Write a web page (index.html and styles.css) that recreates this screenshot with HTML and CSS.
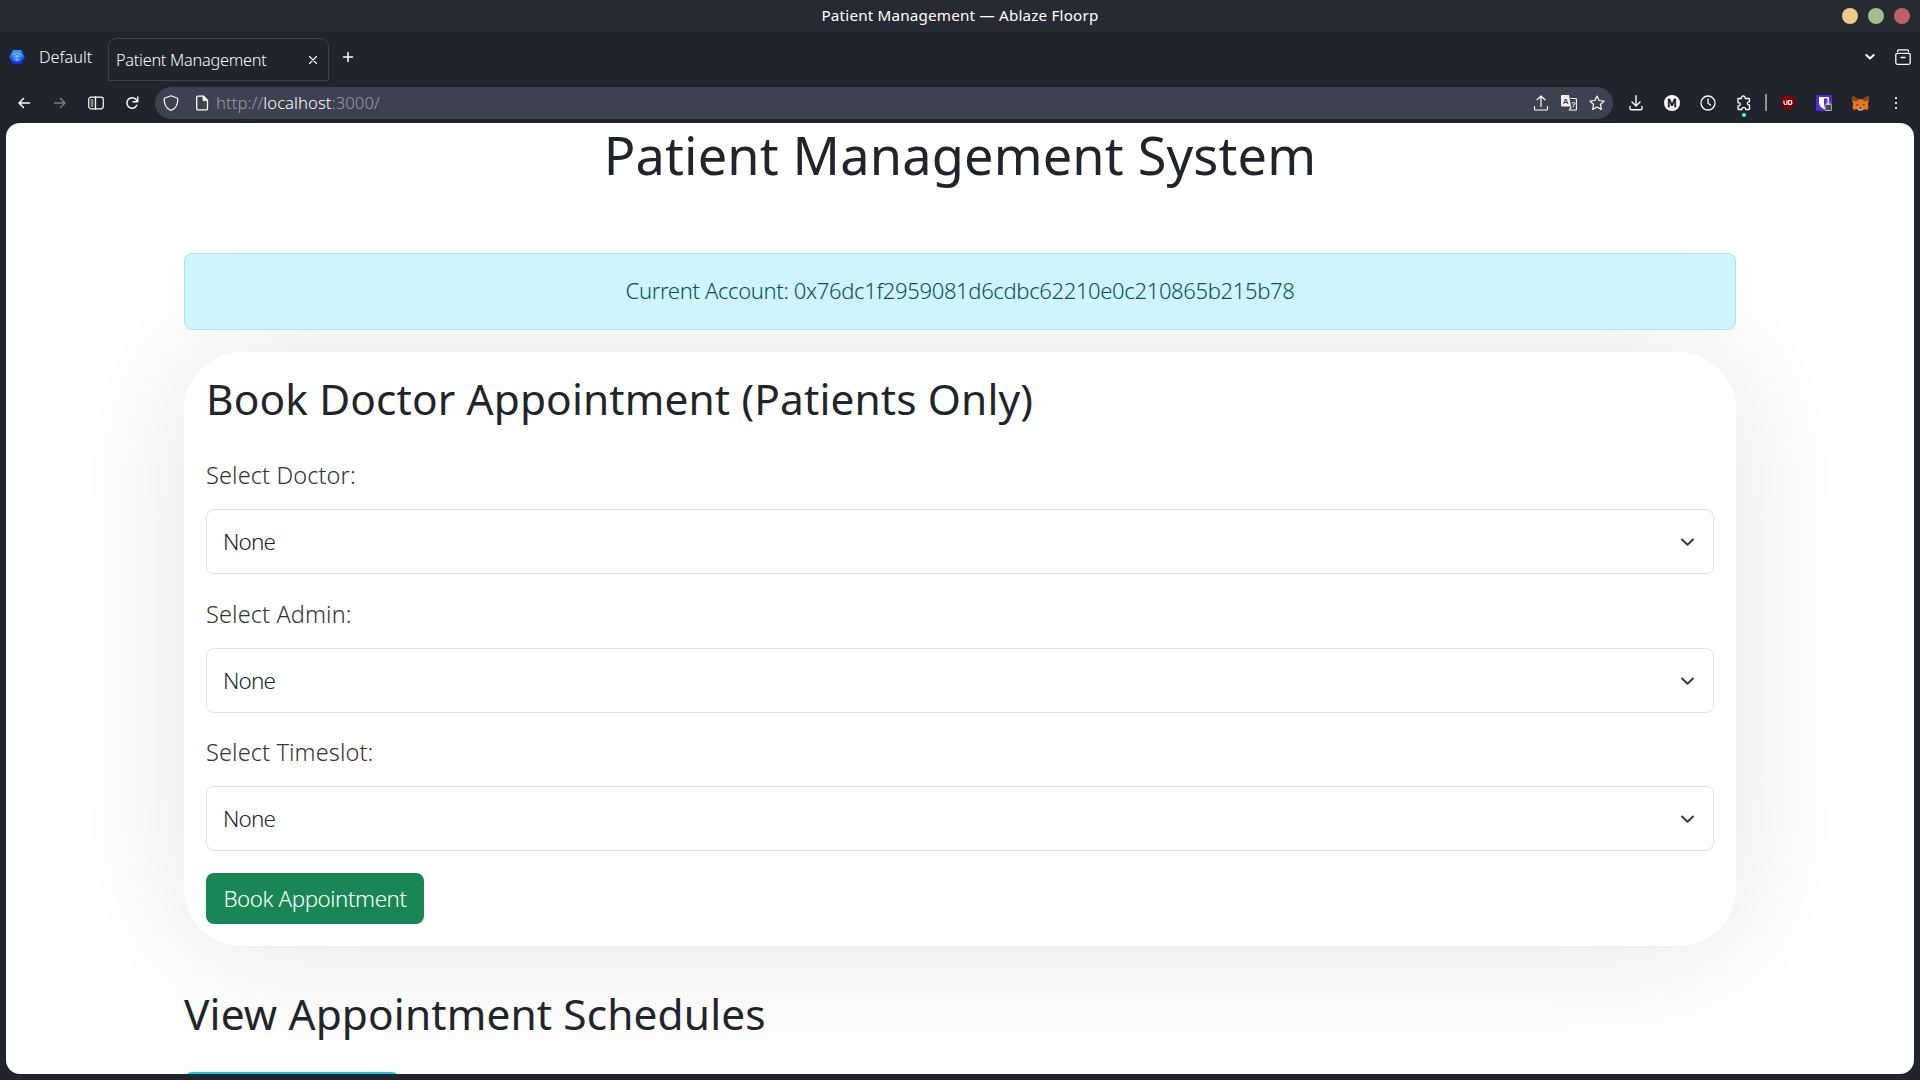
FILE: index.html
```html
<!DOCTYPE html>
<html lang="en">
<head>
<meta charset="utf-8">
<title>Patient Management</title>
<link rel="stylesheet" href="styles.css">
</head>
<body>
<div class="window">
  <header class="titlebar">
    <span class="titlebar-text">Patient Management — Ablaze Floorp</span>
    <div class="window-buttons"><i class="dot minimize"></i><i class="dot maximize"></i><i class="dot close"></i></div>
  </header>

  <div class="tabbar">
    <svg class="workspace-icon" width="16" height="16" viewBox="0 0 16 16">
      <defs><linearGradient id="hex" x1="0" y1="0" x2="0" y2="1"><stop offset="0" stop-color="#2fa4f7"/><stop offset="1" stop-color="#0b2df0"/></linearGradient></defs>
      <path d="M4.6 1h6.8q.6 0 .9.5l3.1 5.7q.4.8 0 1.6l-3.1 5.7q-.3.5-.9.5H4.6q-.6 0-.9-.5L.6 8.800q-.4-.8 0-1.600l3.100-5.700q.3-.5.9-.5z" fill="url(#hex)"/>
      <g fill="none" stroke="#a9d0ff" stroke-width=".8"><path d="M3.600 6.500Q4.500 4 8 4t4.400 2.500M4 7.500q3-1.500 3.200 4.500M12 7.500q-3-1.500-3.200 4.500M8 6v6.500M5.500 5.500Q8 6 8 8q0-2 2.500-2.500M4.200 9.500q1 0 1.500 2M11.800 9.500q-1 0-1.500 2"/></g>
    </svg>
    <span class="workspace-name">Default</span>
    <div class="tab">
      <span class="tab-title">Patient Management</span>
      <svg width="10" height="10" viewBox="0 0 10 10" class="line"><path d="M1.500 1.500l7 7M8.500 1.500l-7 7" stroke-width="1.100"/></svg>
    </div>
    <svg class="new-tab line" width="12" height="12" viewBox="0 0 12 12"><path d="M6 1.500v9M1.500 6h9" stroke-width="1.500"/></svg>
    <div class="tabbar-end">
      <svg width="10" height="8" viewBox="0 0 10 8" class="line"><path d="M1.300 2L5 5.500 8.700 2" stroke-width="2"/></svg>
      <svg width="16" height="16" viewBox="0 0 16 16" class="line"><rect x=".8" y="4.300" width="14.400" height="11" rx="1.500" stroke-width="1.300"/><path d="M2.500 2.500Q2.500.8 4 .8h8q1.500 0 1.500 1.700M6 8.500h4" stroke-width="1.300"/></svg>
    </div>
  </div>

  <nav class="navbar">
    <div class="tool"><svg width="14" height="14" viewBox="0 0 14 14" class="line"><path d="M12.500 7H2M6.500 2.500L2 7l4.500 4.500" stroke-width="1.500"/></svg></div>
    <div class="tool dim"><svg width="14" height="14" viewBox="0 0 14 14" class="line"><path d="M1.500 7H12M7.500 2.500L12 7l-4.500 4.500" stroke-width="1.500"/></svg></div>
    <div class="tool"><svg width="16" height="14" viewBox="0 0 16 14" class="line"><rect x=".7" y="1.200" width="14.600" height="11.600" rx="2.500" stroke-width="1.200"/><path d="M7.500 1v12" stroke-width="1.300"/><path d="M3 4h2M3 6h2M3 8h2M3 10h2" stroke-width=".9"/></svg></div>
    <div class="tool"><svg width="14" height="14" viewBox="0 0 14 14" class="line"><path d="M11.800 9.200A5.200 5.200 0 1 1 11 3.500l1.200 1.300" stroke-width="1.500"/><path d="M12.700 1v4.700H8" stroke-width="1.500"/></svg></div>

    <div class="urlbar">
      <svg width="16" height="16" viewBox="0 0 16 16" class="line"><path d="M8 .8l6 2.200q.8.300.8 1.200c0 5-2.500 9.300-6.200 10.900q-.6.200-1.200 0C3.700 13.500 1.200 9.200 1.200 4.200q0-.9.800-1.200z" stroke-width="1.200"/></svg>
      <svg class="page-icon line" width="14" height="16" viewBox="0 0 14 16"><path d="M1.700 2.200q0-1 1-1h5.800l4 4v8.600q0 1-1 1H2.700q-1 0-1-1z" stroke-width="1.300"/><path d="M8 1.200v4.500h4.500z" fill="#fbfbfe" stroke-width=".8"/></svg>
      <span class="url">http://<b>localhost</b>:3000/</span>
      <div class="url-actions">
        <svg width="16" height="16" viewBox="0 0 16 16" class="line"><path d="M8 11.500V1M4 4.800L8 1l4 3.800M1.500 11.500V14q0 1 1 1h11q1 0 1-1v-2.500" stroke-width="1.200"/></svg>
        <svg width="16" height="16" viewBox="0 0 16 16"><path d="M1 0h7l2 11.500H1q-1 0-1-1V1q0-1 1-1z" fill="#f2f2f6"/><text x="1.700" y="8.500" class="glyph-a">A</text><path d="M9.500 3.500H14.500q1 0 1 1V14q0 1-1 1H8.500l1.700-3.500" fill="none" stroke="#f2f2f6" stroke-width="1.200"/><text x="10" y="12" class="glyph-q">?</text></svg>
        <svg width="16" height="16" viewBox="0 0 16 16" class="line"><path d="M8 1l2.100 4.500 5 .6-3.700 3.400 1 4.900L8 12l-4.400 2.400 1-4.900L.9 6.100l5-.6z" stroke-width="1.200"/></svg>
      </div>
    </div>

    <div class="tool"><svg width="14" height="16" viewBox="0 0 14 16" class="line"><path d="M7 .8v10M3 7l4 3.900L11 7M1 11.500v2q0 1.300 1.300 1.300h9.400q1.300 0 1.300-1.300v-2" stroke-width="1.400"/></svg></div>
    <div class="tool"><svg width="16" height="16" viewBox="0 0 16 16"><circle cx="8" cy="8" r="8" fill="#fff"/><path d="M4 12.300V3.700h1.900L8 8.300l2.100-4.600H12v8.600h-1.600V7L8.700 11H7.300L5.600 7v5.300z" fill="#20242c" stroke="#20242c" stroke-width=".3"/></svg></div>
    <div class="tool"><svg width="16" height="16" viewBox="0 0 16 16" class="line"><circle cx="8" cy="8" r="7" stroke-width="1.300"/><path d="M8 4v4.200l2.500 1.800" stroke-width="1.300"/></svg></div>
    <div class="tool badge"><svg width="16" height="16" viewBox="0 0 16 16" class="line"><path d="M2 3.500h3.500C5.200 1.800 6.200 1 7.300 1S9.400 1.800 9.200 3.500h3.600q.7 0 .7.700v2.600c-1.500-.2-2.100.6-2.100 1.600s.8 1.700 2.100 1.600v3.800q0 .7-.7.700H9.600c.1-1.400-.7-2.100-1.800-2.100s-2 .7-1.900 2.100H2.700q-.7 0-.7-.7v-3c1.500.2 2.300-.5 2.300-1.600S3.500 7.400 2 7.600z" stroke-width="1.300"/></svg></div>
    <span class="separator"></span>
    <div class="tool"><svg width="16" height="16" viewBox="0 0 16 16"><path d="M8 0q3 1.700 7 2c0 7-1 11-7 14C2 13 1 9 1 2q4-.3 7-2z" fill="#800000"/><path d="M4 5.500V8q0 1.500 1.500 1.500T7 8V5.500M8.700 5.500v4H10q1.800 0 1.800-2t-1.800-2z" fill="none" stroke="#fff" stroke-width="1.200"/></svg></div>
    <div class="tool"><svg width="16" height="16" viewBox="0 0 16 16"><rect width="16" height="16" rx="1.500" fill="#4a2fe0"/><path d="M3 2h10v6q0 3.500-5 6.300Q3 11.500 3 8z" fill="#fff"/><path d="M8 3.500h3.500V8q0 2-3.500 4.200z" fill="#4a2fe0"/><rect x="9" y="9.500" width="6.700" height="6" rx=".8" fill="#4b4b4b" stroke="#e8e8e8" stroke-width=".7"/><path d="M10.500 9.500V8.300q0-1.500 1.800-1.500t1.800 1.500v1.200" fill="none" stroke="#999" stroke-width="1.200"/></svg></div>
    <div class="tool"><svg width="17" height="16" viewBox="0 0 17 16"><path d="M.8.700l5.500 3.500h4.400L16.200.700l.6 4.800-1 3.500.8 3.300-1.300 2.700-3.300-.8-1.500 1.200H6.500L5 14l-3.300 1L.4 12.300 1.200 9 .2 5.500z" fill="#e8761b"/><path d="M.8.700l5.500 3.500L5 6.500.7 5.600zM16.200.700l-5.500 3.500L12 6.500l4.300-.9z" fill="#8a461a"/><path d="M4.500 8.700l2.400 1.200-2.200.5zM12.500 8.700l-2.400 1.200 2.200.5z" fill="#33302c"/><path d="M5.500 13l1.500-1h3l1.500 1-1.200 2.300H6.700z" fill="#d8bfb0"/><path d="M7.200 12.600h2.600l.4 1.200H6.800z" fill="#28201c"/></svg></div>
    <div class="tool"><svg width="4" height="14" viewBox="0 0 4 14" fill="#d8d8dc"><path d="M1 1h2v2H1zM1 6h2v2H1zM1 11h2v2H1z"/></svg></div>
  </nav>

  <main class="viewport">
    <h1 class="page-title">Patient Management System</h1>
    <div class="container">
      <div class="alert">Current Account: 0x76dc1f2959081d6cdbc62210e0c210865b215b78</div>
      <section class="card">
        <h2 class="heading">Book Doctor Appointment (Patients Only)</h2>
        <div class="field"><span class="label">Select Doctor:</span>
          <div class="select">None<svg class="caret" width="21" height="21" viewBox="0 0 21 21"><path d="M5 8.500l5.500 5.300L16 8.500"/></svg></div></div>
        <div class="field"><span class="label">Select Admin:</span>
          <div class="select">None<svg class="caret" width="21" height="21" viewBox="0 0 21 21"><path d="M5 8.500l5.500 5.300L16 8.500"/></svg></div></div>
        <div class="field"><span class="label">Select Timeslot:</span>
          <div class="select">None<svg class="caret" width="21" height="21" viewBox="0 0 21 21"><path d="M5 8.500l5.500 5.300L16 8.500"/></svg></div></div>
        <button class="button">Book Appointment</button>
      </section>
      <h2 class="heading schedules">View Appointment Schedules</h2>
      <button class="button info" aria-label="View schedules"></button>
    </div>
  </main>
</div>
</body>
</html>
```

FILE: styles.css
```css
* { box-sizing: border-box; }
body {
  margin: 0;
  font-family: "Noto Sans", "Open Sans", sans-serif;
  font-weight: 340;
  color: #212529;
}
svg { display: block; flex: none; }
.line { fill: none; stroke: #fbfbfe; stroke-linecap: round; stroke-linejoin: round; }

.window {
  height: 1080px;
  display: flex;
  flex-direction: column;
  background: #20242c;
  overflow: hidden;
}

.titlebar {
  height: 32px;
  flex: none;
  display: grid;
  grid-template-columns: 1fr auto 1fr;
  align-items: center;
  background: #262a33;
}
.titlebar-text {
  grid-column: 2;
  padding-bottom: 2px;
  font-size: 15.200px;
  font-weight: 400;
  line-height: 28px;
  letter-spacing: 0.200px;
  color: #fff;
}
.window-buttons { display: flex; gap: 10px; justify-content: flex-end; padding-right: 10px; }
.dot { width: 16px; height: 16px; border-radius: 50%; }
.minimize { background: #ebcb8b; }
.maximize { background: #a3be8c; }
.close { background: #bf616a; }

.tabbar {
  height: 50px;
  flex: none;
  display: flex;
  align-items: center;
  padding-left: 9px;
  color: #fbfbfe;
  font-size: 16.300px;
}
.workspace-name { width: 69px; margin-left: 14px; }
.tab {
  width: 221px;
  height: 43px;
  margin-top: 5px;
  padding: 0 10px 0 7px;
  display: flex;
  align-items: center;
  justify-content: space-between;
  border: 1px solid #3b4150;
  border-radius: 8px 8px 0 0;
}
.tab-title { letter-spacing: -0.250px; }
.new-tab { margin-left: 13px; }
.tabbar-end { display: flex; align-items: center; gap: 20px; margin-left: auto; padding-right: 9px; }

.navbar {
  height: 41px;
  flex: none;
  display: flex;
  align-items: center;
  padding: 0 6px;
}
.tool { width: 36px; height: 32px; display: flex; align-items: center; justify-content: center; position: relative; }
.dim { opacity: 0.400; }
.badge::after {
  content: "";
  position: absolute;
  left: 16px;
  bottom: 2px;
  width: 4px;
  height: 4px;
  border-radius: 50%;
  background: #4dffc0;
}
.separator { width: 2px; height: 17px; margin: 0 3px; background: #8f9197; }
.urlbar {
  flex: 1;
  height: 32px;
  margin: 0 5px;
  padding: 0 8px;
  display: flex;
  align-items: center;
  border-radius: 16px;
  background: #3d4251;
}
.page-icon { margin: 0 7px 0 16px; }
.url { font-size: 16.700px; color: #9a9ca6; letter-spacing: 0.050px; }
.url b { font-weight: inherit; color: #fbfbfe; }
.url-actions { display: flex; gap: 12px; margin-left: auto; }
.glyph-a { font: 700 8px "Liberation Sans", sans-serif; fill: #3d4251; }
.glyph-q { font: 700 8px "Liberation Sans", sans-serif; fill: #f2f2f6; }

.viewport {
  flex: 1;
  min-height: 0;
  margin: 0 6px 6px;
  overflow: hidden;
  border-radius: 14px;
  background: #fff;
}
.page-title {
  margin: 0 0 66px;
  font-size: 52.300px;
  font-weight: 400;
  line-height: 64px;
  letter-spacing: 0.160px;
  text-align: center;
}
.container { width: 1552px; margin: 0 auto; }
.alert {
  position: relative;
  z-index: 1;
  height: 77px;
  display: flex;
  align-items: center;
  justify-content: center;
  padding-bottom: 3px;
  font-size: 22px;
  letter-spacing: -0.350px;
  color: #055160;
  background: #cff4fc;
  border: 1px solid #9eeaf9;
  border-radius: 8px;
}
.card {
  margin-top: 22px;
  padding: 22px;
  border-radius: 58px;
  background: #fff;
  box-shadow: 0 0 133px rgba(0, 0, 0, 0.110);
}
.heading { margin: 0; font-size: 42.400px; font-weight: 400; line-height: 50px; letter-spacing: 0.130px; }
.card .heading { margin-bottom: 33px; }
.field { margin-bottom: 21.500px; }
.label { display: block; height: 36px; margin-bottom: 16px; font-size: 23.500px; line-height: 36px; letter-spacing: 0.120px; color: #333; }
.select {
  height: 65px;
  display: flex;
  align-items: center;
  justify-content: space-between;
  padding: 0 15px 0 16px;
  font-size: 22.500px;
  letter-spacing: -0.900px;
  border: 1px solid #dee2e6;
  border-radius: 8px;
}
.caret path { fill: none; stroke: #343a40; stroke-width: 2; stroke-linecap: round; stroke-linejoin: round; }
.button {
  display: block;
  width: 218px;
  height: 51px;
  padding: 0;
  border: 0;
  border-radius: 8px;
  font: inherit;
  font-size: 22.300px;
  letter-spacing: -0.420px;
  color: #fff;
  background: #198754;
}
.schedules { margin-top: 43px; }
.info { width: 216px; margin-top: 33px; background: #0dcaf0; }
```
